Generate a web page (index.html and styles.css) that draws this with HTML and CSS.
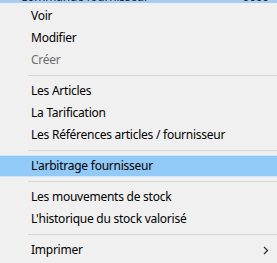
FILE: index.html
```html
<!DOCTYPE html>
<html lang="fr">
<head>
<meta charset="utf-8">
<link rel="stylesheet" href="styles.css">
</head>
<body>
<div class="under"><span class="under-text">Commande fournisseur</span><span class="under-right">0000</span></div>
<div class="menu">
  <div class="item">Voir</div>
  <div class="item">Modifier</div>
  <div class="item disabled">Créer</div>
  <div class="sep"></div>
  <div class="item">Les Articles</div>
  <div class="item">La Tarification</div>
  <div class="item">Les Références articles / fournisseur</div>
  <div class="sep"></div>
  <div class="item active">L'arbitrage fournisseur</div>
  <div class="sep"></div>
  <div class="item">Les mouvements de stock</div>
  <div class="item">L'historique du stock valorisé</div>
  <div class="sep"></div>
  <div class="item sub">Imprimer<span class="arrow"><svg width="6" height="9" viewBox="0 0 6 9"><path d="M1 1 L4.5 4.5 L1 8" fill="none" stroke="#333" stroke-width="1.3"/></svg></span></div>
</div>
</body>
</html>
```
FILE: styles.css
```css
html, body {
  margin: 0;
  padding: 0;
  background: #f0f0f0;
  width: 277px;
  height: 263px;
  overflow: hidden;
}
body {
  font-family: "Noto Sans", "Open Sans", sans-serif;
  font-size: 12px;
  letter-spacing: -0.25px;
  color: #000;
}
.under {
  height: 3px;
  background: #a9cdef;
  overflow: hidden;
  display: flex;
  justify-content: space-between;
  padding: 0 8px 0 20px;
}
.under-text, .under-right {
  display: block;
  line-height: 12px;
  margin-top: -9px;
  color: #1c2b4a;
  font-size: 12px;
}
.menu {
  padding-top: 2px;
}
.item {
  height: 22px;
  line-height: 22px;
  padding-left: 31px;
  display: flex;
  align-items: center;
  white-space: nowrap;
}
.item.disabled {
  color: #6d6d6d;
}
.item.active {
  background: #91c9f7;
  box-shadow: inset 0 1px 0 #cce4f7, inset 0 -1px 0 #cce4f7;
}
.item.sub {
  justify-content: space-between;
  padding-right: 8px;
}
.arrow {
  display: flex;
  align-items: center;
}
.sep {
  height: 9px;
  display: flex;
  align-items: center;
  padding-left: 28px;
}
.sep::before {
  content: "";
  display: block;
  flex: 1;
  height: 1px;
  background: #d7d7d7;
}
```
